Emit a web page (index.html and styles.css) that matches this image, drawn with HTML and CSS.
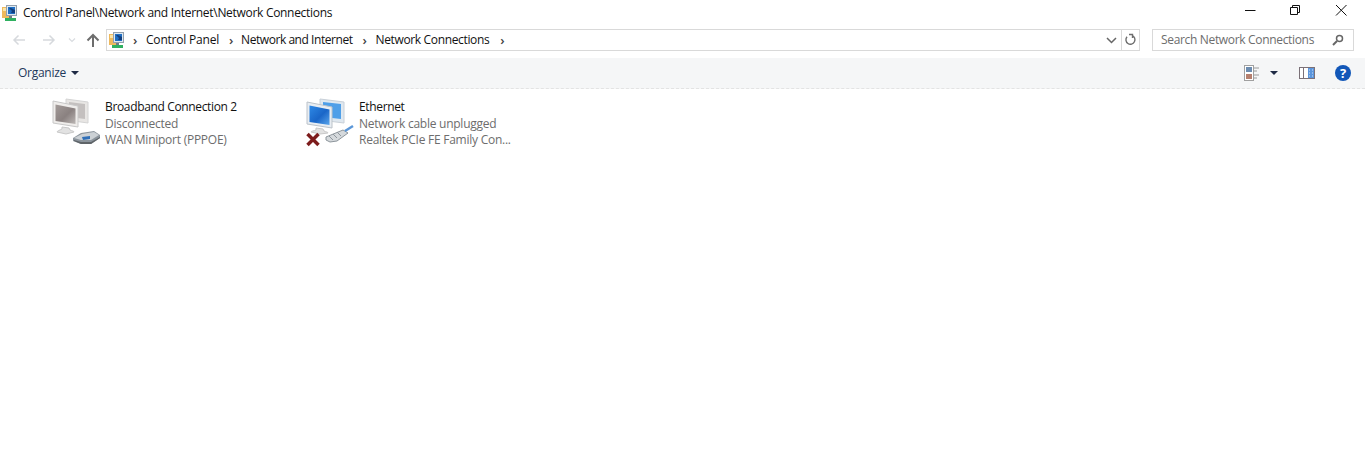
FILE: index.html
```html
<!DOCTYPE html>
<html lang="en">
<head>
<meta charset="utf-8">
<title>Network Connections</title>
<link rel="stylesheet" href="styles.css">
</head>
<body>
<svg class="defs" width="0" height="0" aria-hidden="true">
  <defs>
    <linearGradient id="blue" x1="0" y1="0" x2="1" y2="1">
      <stop offset="0" stop-color="#2f8ae6"/>
      <stop offset=".55" stop-color="#1a66c8"/>
      <stop offset="1" stop-color="#5aa6ec"/>
    </linearGradient>
    <linearGradient id="grey" x1="0" y1="0" x2="1" y2="1">
      <stop offset="0" stop-color="#a39b99"/>
      <stop offset=".55" stop-color="#8a8180"/>
      <stop offset="1" stop-color="#bcb7b5"/>
    </linearGradient>
    <symbol id="cp" viewBox="0 0 16 16">
      <rect x="0" y="2" width="7" height="11" fill="#eeb95c"/>
      <rect x="1" y="3" width="5" height="3" fill="#fbe4a6"/>
      <rect x="4" y="0" width="11" height="11" fill="#93a0ad"/>
      <rect x="5" y="1" width="9" height="9" fill="#dfe8f0"/>
      <rect x="6" y="2" width="7" height="7" fill="#1f6fc4"/>
      <path d="M7 3l3 3-1 2h4V5L9 3z" fill="#123f7e"/>
      <rect x="3" y="13" width="11" height="3" fill="#2fb060"/>
      <rect x="7" y="11" width="3" height="2" fill="#6f7c88"/>
    </symbol>
  </defs>
</svg>

<header class="titlebar">
  <svg class="app-icon"><use href="#cp"/></svg>
  <span class="title">Control Panel\Network and Internet\Network Connections</span>
  <div class="winbtns">
    <svg class="winbtn" width="46" height="20" viewBox="0 0 46 20"><path d="M19 10.500h10.500" stroke="#111" fill="none"/></svg>
    <svg class="winbtn" width="46" height="20" viewBox="0 0 46 20"><path d="M18.500 7.500h7v7h-7zM20.500 7.500v-2h7v7h-2" stroke="#111" fill="none"/></svg>
    <svg class="winbtn" width="46" height="20" viewBox="0 0 46 20"><path d="M18 5l10.500 10.500M28.500 5L18 15.500" stroke="#111" fill="none"/></svg>
  </div>
</header>

<nav class="addressrow">
  <div class="navbtns">
    <svg width="14" height="12" viewBox="0 0 14 12"><path d="M13 6H2M6.500 1.500L2 6l4.500 4.500" stroke="#d6d9dd" stroke-width="1.500" fill="none"/></svg>
    <svg class="nav-fwd" width="14" height="12" viewBox="0 0 14 12"><path d="M1 6h11M7.500 1.500L12 6l-4.500 4.500" stroke="#d6d9dd" stroke-width="1.500" fill="none"/></svg>
    <svg class="nav-drop" width="8" height="6" viewBox="0 0 8 6"><path d="M1 1.500l3 3 3-3" stroke="#d9dce0" stroke-width="1.200" fill="none"/></svg>
    <svg class="nav-up" width="14" height="14" viewBox="0 0 14 14"><path d="M7 14V2M1.500 7.500L7 2l5.500 5.500" stroke="#6d6d6d" stroke-width="2" fill="none"/></svg>
  </div>
  <div class="addressbar">
    <svg class="crumb-icon"><use href="#cp"/></svg>
    <span class="sep">›</span><span class="crumb crumb-cp">Control Panel</span>
    <span class="sep">›</span><span class="crumb crumb-ni">Network and Internet</span>
    <span class="sep">›</span><span class="crumb crumb-nc">Network Connections</span>
    <span class="sep">›</span>
    <div class="addr-end">
      <svg class="addr-chev" width="11" height="7" viewBox="0 0 11 7"><path d="M1 1l4.500 4.500L10 1" stroke="#666" stroke-width="1.500" fill="none"/></svg>
      <span class="addr-refresh">
        <svg width="13" height="14" viewBox="0 0 13 14"><path d="M5 1.500h3.500v3.500M8 2.500A4.500 4.500 0 1 1 3 3.800" stroke="#6e6e6e" stroke-width="1.400" fill="none"/></svg>
      </span>
    </div>
  </div>
  <div class="searchbox">
    <span class="search-text">Search Network Connections</span>
    <svg width="12" height="12" viewBox="0 0 12 12"><circle cx="7.500" cy="4.500" r="3" stroke="#666" stroke-width="1.500" fill="none"/><path d="M5 7l-4 4" stroke="#666" stroke-width="2" fill="none"/></svg>
  </div>
</nav>

<div class="toolbar">
  <span class="organize">Organize</span>
  <span class="caret caret-org"></span>
  <div class="tool-right">
    <svg width="15" height="16" viewBox="0 0 15 16">
      <rect x=".5" y=".5" width="9" height="15" fill="#fff" stroke="#a0a0a0"/>
      <rect x="2" y="2" width="6" height="5" fill="#6c8cb0"/>
      <rect x="2" y="9" width="6" height="5" fill="#b57f6e"/>
      <path d="M10 3h5M10 6h3M10 10h5M10 13h3" stroke="#9a9a9a"/>
    </svg>
    <span class="caret caret-view"></span>
    <svg class="pane-icon" width="16" height="12" viewBox="0 0 16 12">
      <rect x=".5" y=".5" width="15" height="11" fill="#fff" stroke="#7b7178"/>
      <rect x="9" y="1" width="6" height="10" fill="#5b95dc"/>
      <path d="M10 3h1M13 3h1M10 6h1M13 6h1M10 9h1M13 9h1" stroke="#cfe2f8"/>
      <path d="M4.500 1v10" stroke="#7b7178"/>
    </svg>
    <span class="help">?</span>
  </div>
</div>

<main class="items">
  <article class="item">
    <svg class="item-icon" width="50" height="50" viewBox="0 0 50 50">
      <path d="M14 1l22 3v21l-22-3z" fill="#e8e6e4" stroke="#d4d4d4"/>
      <path d="M17 4l16 2v15l-16-2z" fill="#c4c0bf"/>
      <path d="M1 3l25 5v21L1 25z" fill="#efedeb" stroke="#c8c8c8"/>
      <path d="M3.500 6.500l20 4v15.500l-20-3z" fill="url(#grey)"/>
      <path d="M10 29l7 1 1 2c2 1 4 1 4 2l-8 2-9-2c0-1 3-2 5-3z" fill="#e2e2e2" stroke="#c8c8c8"/>
      <path d="M21 40l8-5 13-2 6 4v3l-9 6H29l-8-3z" fill="#8b949c"/>
      <path d="M22 40l8-4 12-2 5 3-8 5H29z" fill="#ccd1d5"/>
      <path d="M30 39l8-1v3l-7 1z" fill="#2f6fb8"/>
      <path d="M22 42l7 2h10l9-5v1l-9 6H29l-7-3z" fill="#5f6468"/>
    </svg>
    <div class="item-text">
      <div class="item-name">Broadband Connection 2</div>
      <div class="item-sub">Disconnected</div>
      <div class="item-sub">WAN Miniport (PPPOE)</div>
    </div>
  </article>
  <article class="item">
    <svg class="item-icon" width="50" height="50" viewBox="0 0 50 50">
      <path d="M14 1l24 3v21l-24-3z" fill="#dfe8f0" stroke="#c8d0d8"/>
      <path d="M17 4l18 2v15l-18-2z" fill="#4f9fe8"/>
      <path d="M1 4l25 5v21L1 26z" fill="#e8edf2" stroke="#bcc3ca"/>
      <path d="M3.500 7.500l20 4v15.500l-20-3z" fill="url(#blue)"/>
      <path d="M10 30l7 1 1 2c2 1 4 1 4 2l-8 1-9-2c0-1 3-1 5-2z" fill="#e2e2e2" stroke="#c8c8c8"/>
      <path d="M20 39l17-7 5 3-11 8-7 1-4-2z" fill="#d5d9dc" stroke="#8e969c"/>
      <path d="M23 38l4 4M27 36l4 4M31 34l4 4" stroke="#8e969c"/>
      <path d="M39 33l8-5" stroke="#5b97d8" stroke-width="2.500" fill="none"/>
      <path d="M1.500 36l11 11M12.500 36l-11 11" stroke="#7d1c1c" stroke-width="3.500" fill="none"/>
    </svg>
    <div class="item-text">
      <div class="item-name">Ethernet</div>
      <div class="item-sub">Network cable unplugged</div>
      <div class="item-sub">Realtek PCIe FE Family Con...</div>
    </div>
  </article>
</main>
</body>
</html>
```

FILE: styles.css
```css
html, body {
  margin: 0;
  padding: 0;
  background: #fff;
  height: 467px;
  overflow: hidden;
}
body {
  font-family: "Open Sans", "Noto Sans", sans-serif;
  font-size: 12px;
  color: #111;
  line-height: 16px;
}
.defs { display: block; height: 0; }

.titlebar {
  height: 25px;
  display: flex;
  align-items: center;
  padding-left: 2px;
}
.app-icon { width: 16px; height: 16px; margin-right: 5px; }
.title { letter-spacing: -0.3px; }
.winbtns { margin-left: auto; display: flex; margin-right: 1px; margin-top: -5px; }
.winbtn { display: block; }

.addressrow {
  height: 22px;
  margin-top: 4px;
  display: flex;
  align-items: center;
}
.navbtns { width: 106px; display: flex; align-items: center; padding-left: 12px; box-sizing: border-box; }
.nav-fwd { margin-left: 16px; }
.nav-drop { margin-left: 12px; }
.nav-up { margin-left: 10px; }

.addressbar {
  width: 1034px;
  height: 22px;
  box-sizing: border-box;
  border: 1px solid #d9d9d9;
  display: flex;
  align-items: center;
  padding-left: 2px;
  margin-right: 12px;
}
.crumb-icon { width: 16px; height: 16px; margin-right: 8px; }
.crumb { letter-spacing: -0.35px; margin: 0 10px 0 8px; }
.crumb-cp { letter-spacing: -0.2px; margin-left: 9px; }
.crumb-ni { letter-spacing: -0.45px; margin-left: 8px; }
.crumb-nc { margin-left: 9px; margin-right: 11px; }
.sep { color: #444; font-size: 13px; font-weight: 600; width: 4px; }
.addr-end { margin-left: auto; display: flex; align-items: center; height: 100%; }
.addr-chev { margin-right: 4px; }
.addr-refresh {
  width: 17px;
  height: 100%;
  border-left: 1px solid #d9d9d9;
  display: flex;
  align-items: center;
  justify-content: center;
}

.searchbox {
  width: 202px;
  height: 22px;
  box-sizing: border-box;
  border: 1px solid #d9d9d9;
  display: flex;
  align-items: center;
  justify-content: space-between;
  padding: 0 9px 0 8px;
}
.search-text { color: #6d6d6d; letter-spacing: -0.33px; }

.toolbar {
  margin-top: 7px;
  height: 31px;
  box-sizing: border-box;
  background: #f5f6f7;
  border-bottom: 1px dashed #e3e3e3;
  display: flex;
  align-items: center;
  padding-left: 18px;
}
.organize { color: #1e395b; letter-spacing: -0.27px; }
.caret {
  width: 0;
  height: 0;
  border-left: 4px solid transparent;
  border-right: 4px solid transparent;
  border-top: 4px solid #1e2a44;
}
.caret-org { margin-left: 5px; }
.tool-right { margin-left: auto; display: flex; align-items: center; margin-right: 14px; }
.caret-view { margin-left: 11px; }
.pane-icon { margin-left: 21px; }
.help {
  margin-left: 20px;
  width: 16px;
  height: 16px;
  border-radius: 50%;
  background: #1257b8;
  color: #fff;
  font-weight: 700;
  font-size: 13px;
  line-height: 16px;
  text-align: center;
}

.items {
  display: flex;
  padding: 9px 0 0 52px;
}
.item { display: flex; width: 254px; }
.item-icon { flex: none; margin-right: 3px; }
.item-text { white-space: nowrap; margin-top: 1px; letter-spacing: -0.35px; }
.item-name { color: #111; margin-bottom: 1px; }
.item-sub { color: #6d6d6d; letter-spacing: -0.25px; }
```
